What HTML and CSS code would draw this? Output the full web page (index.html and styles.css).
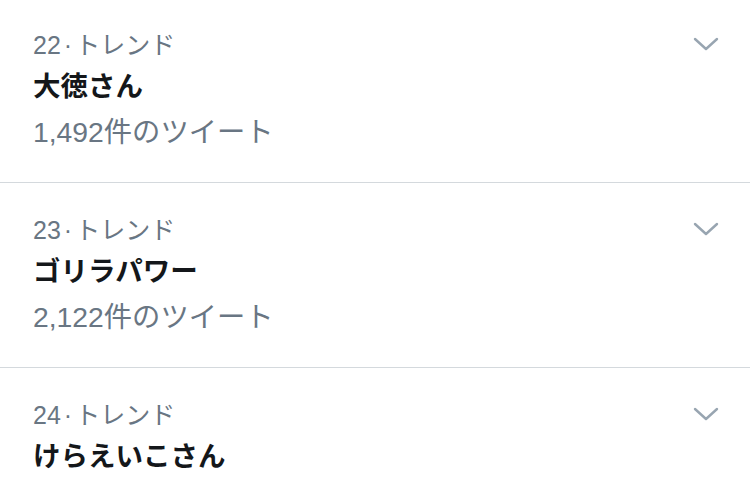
FILE: index.html
```html
<!DOCTYPE html>
<html>
<head>
    <title>トレンド</title>
    <link rel="stylesheet" href="styles.css">
</head>
<body>
    <div class="trend">
        <div class="meta">22<span class="dot">·</span>トレンド</div>
        <div class="name">大徳さん</div>
        <div class="count">1,492件のツイート</div>
        <svg class="chevron" width="26" height="16" viewBox="0 0 26 16"><path d="M2 3 L13 13 L24 3" fill="none" stroke="#98a5b1" stroke-width="2.4" stroke-linecap="round" stroke-linejoin="round"/></svg>
    </div>
    <div class="trend">
        <div class="meta">23<span class="dot">·</span>トレンド</div>
        <div class="name">ゴリラパワー</div>
        <div class="count">2,122件のツイート</div>
        <svg class="chevron" width="26" height="16" viewBox="0 0 26 16"><path d="M2 3 L13 13 L24 3" fill="none" stroke="#98a5b1" stroke-width="2.4" stroke-linecap="round" stroke-linejoin="round"/></svg>
    </div>
    <div class="trend">
        <div class="meta">24<span class="dot">·</span>トレンド</div>
        <div class="name">けらえいこさん</div>
        <svg class="chevron" width="26" height="16" viewBox="0 0 26 16"><path d="M2 3 L13 13 L24 3" fill="none" stroke="#98a5b1" stroke-width="2.4" stroke-linecap="round" stroke-linejoin="round"/></svg>
    </div>
</body>
</html>
```

FILE: styles.css
```css
body { margin: 0; background: #fff; font-family: "Liberation Sans", "Noto Sans CJK JP", sans-serif; overflow: hidden; }
.trend { position: relative; padding: 29px 33px 29px 33px; border-bottom: 1px solid #d4d9dd; }
.trend:first-child { padding-top: 27px; }
.meta { color: #697683; font-size: 25px; line-height: 36px; }
.dot { margin: 0 3px; }
.name { color: #14171a; font-size: 27.5px; font-weight: bold; line-height: 48px; }
.count { color: #697683; font-size: 28.3px; line-height: 42px; }
.chevron { position: absolute; top: 38px; right: 31px; }
.trend:first-child .chevron { top: 36px; }
```
